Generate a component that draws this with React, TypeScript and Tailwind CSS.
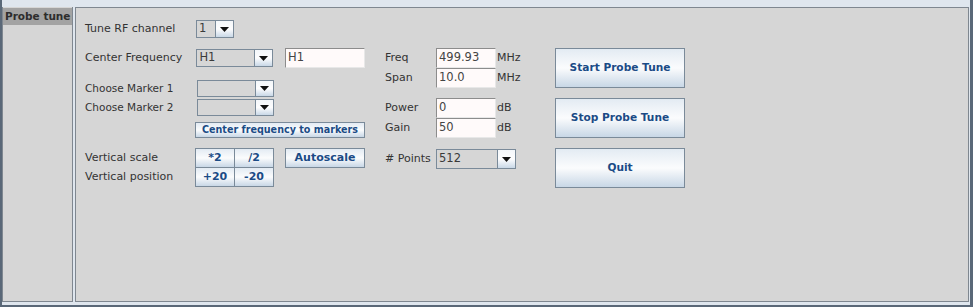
const font = "font-['DejaVu_Sans',sans-serif]";

const Arrow = () => (
  <svg width="9" height="5" viewBox="0 0 9 5">
    <polygon points="0,0 9,0 4.5,5" fill="#111" />
  </svg>
);

const Combo = ({ value, w, h }: { value?: string; w: string; h: string }) => (
  <div className={`flex ${w} ${h} border border-[#7a8a99] bg-[#d6d6d6]`}>
    <div className="flex-1 flex items-center pl-[2px] text-[11.5px] text-[#3a3a3a]">{value}</div>
    <div className="w-[18px] flex items-center justify-center border-l border-[#7a8a99] bg-linear-to-b from-[#f4f7fa] via-[#fdfdfe] to-[#c9d8e7]">
      <Arrow />
    </div>
  </div>
);

const Field = ({ value, w, h }: { value: string; w: string; h: string }) => (
  <div className={`${w} ${h} flex items-center pl-[2px] border border-[#8c8c8c] border-b-[#e8e8e8] border-r-[#e8e8e8] bg-[#fffafa] text-[11.5px] text-[#444]`}>
    {value}
  </div>
);

const Btn = ({ label, cls }: { label: string; cls: string }) => (
  <button className={`${cls} flex items-center justify-center whitespace-nowrap border border-[#7a8a99] bg-linear-to-b from-[#e3ebf3] via-[#fbfcfd] to-[#c8d7e6] font-bold text-[#1b4b86]`}>
    {label}
  </button>
);

export default function App() {
  return (
    <div className={`${font} w-[973px] h-[307px] flex bg-[#dfe6ee] border-l-2 border-r-[3px] border-b-2 border-[#5a6878] pt-[7px] pr-[1px] pb-[3px] text-[#333]`}>
      {/* tab column */}
      <div className="w-[71px] flex flex-col bg-[#d6d6d6] border-l border-b border-r border-[#7f8790]">
        <div className="h-[17px] mt-px bg-[#a3a3a3] pl-[2px] text-[10.5px] font-bold leading-[17px] whitespace-nowrap text-[#2d2d2d]">Probe tune</div>
      </div>

      {/* content */}
      <div className="flex-1 ml-[2px] bg-[#d6d6d6] border border-[#7f8790] pl-[9px] text-[11px]">
        <div className="mt-[12px] flex items-center h-[18px]">
          <span className="w-[111px]">Tune RF channel</span>
          <Combo value="1" w="w-[38px]" h="h-[18px]" />
        </div>

        <div className="mt-[10px] flex">
          {/* column A */}
          <div className="w-[280px] flex flex-col">
            <div className="flex items-center h-[20px]">
              <span className="w-[112px]">Center Frequency</span>
              <Combo value="H1" w="w-[77px]" h="h-[18px]" />
              <div className="ml-[12px]"><Field value="H1" w="w-[80px]" h="h-[20px]" /></div>
            </div>
            <div className="mt-[12px] flex items-center h-[17px] text-[10.5px]">
              <span className="w-[112px]">Choose Marker 1</span>
              <Combo w="w-[77px]" h="h-[17px]" />
            </div>
            <div className="mt-[2px] flex items-center h-[17px] text-[10.5px]">
              <span className="w-[112px]">Choose Marker 2</span>
              <Combo w="w-[77px]" h="h-[17px]" />
            </div>
            <div className="mt-[6px] pl-[110px]">
              <Btn label="Center frequency to markers" cls="w-[170px] h-[16px] text-[9.6px]" />
            </div>
            <div className="mt-[10px] flex items-center h-[20px]">
              <span className="w-[110px]">Vertical scale</span>
              <Btn label="*2" cls="w-[40px] h-[20px] text-[11px]" />
              <Btn label="/2" cls="w-[40px] h-[20px] text-[11px] -ml-px" />
              <Btn label="Autoscale" cls="w-[80px] h-[20px] text-[11px] ml-[11px]" />
            </div>
            <div className="-mt-px flex items-center h-[20px]">
              <span className="w-[110px]">Vertical position</span>
              <Btn label="+20" cls="w-[40px] h-[20px] text-[11px]" />
              <Btn label="-20" cls="w-[40px] h-[20px] text-[11px] -ml-px" />
            </div>
          </div>

          {/* column B */}
          <div className="ml-[20px] w-[150px] flex flex-col">
            <div className="flex items-center h-[20px]">
              <span className="w-[51px]">Freq</span>
              <Field value="499.93" w="w-[60px]" h="h-[20px]" />
              <span className="ml-px">MHz</span>
            </div>
            <div className="flex items-center h-[20px]">
              <span className="w-[51px]">Span</span>
              <Field value="10.0" w="w-[60px]" h="h-[20px]" />
              <span className="ml-px">MHz</span>
            </div>
            <div className="mt-[10px] flex items-center h-[20px]">
              <span className="w-[51px]">Power</span>
              <Field value="0" w="w-[60px]" h="h-[20px]" />
              <span className="ml-px">dB</span>
            </div>
            <div className="flex items-center h-[20px]">
              <span className="w-[51px]">Gain</span>
              <Field value="50" w="w-[60px]" h="h-[20px]" />
              <span className="ml-px">dB</span>
            </div>
            <div className="mt-[11px] flex items-center h-[20px]">
              <span className="w-[51px]">#&nbsp;Points</span>
              <Combo value="512" w="w-[80px]" h="h-[20px]" />
            </div>
          </div>

          {/* column C */}
          <div className="ml-[20px] flex flex-col gap-[10px]">
            <Btn label="Start Probe Tune" cls="w-[130px] h-[40px] text-[10.6px]" />
            <Btn label="Stop Probe Tune" cls="w-[130px] h-[40px] text-[10.6px]" />
            <Btn label="Quit" cls="w-[130px] h-[40px] text-[10.6px]" />
          </div>
        </div>
      </div>
    </div>
  );
}
